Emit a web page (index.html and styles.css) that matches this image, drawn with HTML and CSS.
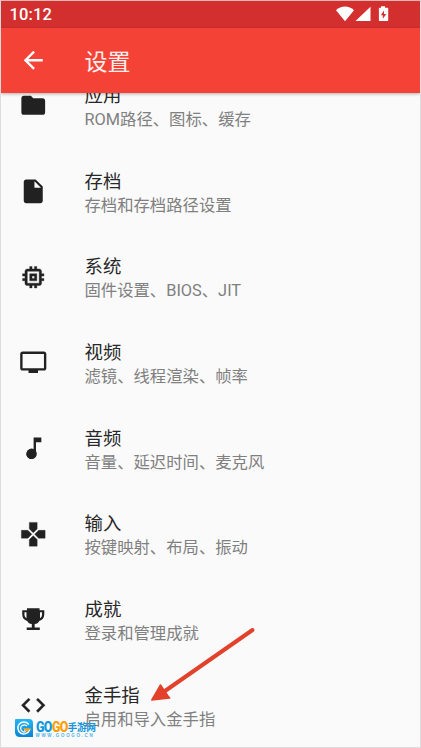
FILE: index.html
```
<!DOCTYPE html>
<html lang="zh-CN">
<head>
<meta charset="utf-8">
<title>设置</title>
<link rel="stylesheet" href="styles.css">
</head>
<body>
<div class="screen">
  <header class="status">
    <span class="clock">10:12</span>
    <svg class="status-icons" width="54" height="18" viewBox="0 0 54 18">
      <path d="M0 4.2C5-.7 13-.7 18 4.2L9 15.2Z"/>
      <path d="M34.5 .8V15H19.5Z"/>
      <path fill-rule="evenodd" d="M45 .2h4v1.5h2.3q.9 0 .9.9v11.6q0 .9-.9.9h-7.5q-.9 0-.9-.9V2.6q0-.9.9-.9H45ZM48 4.5l-3.2 4.7h2v3.6l3.5-4.8H48Z"/>
    </svg>
  </header>
  <div class="toolbar">
    <svg class="back" viewBox="0 0 24 24"><path d="M20 11H7.83l5.59-5.59L12 4l-8 8 8 8 1.41-1.41L7.83 13H20z"/></svg>
    <h1>设置</h1>
  </div>
  <main>
    <ul class="list">
      <li><svg class="icon" viewBox="0 0 24 24"><path d="M10 4H4c-1.1 0-2 .9-2 2v12c0 1.1.9 2 2 2h16c1.1 0 2-.9 2-2V8c0-1.1-.9-2-2-2h-8z"/></svg><div><h2>应用</h2><p>ROM路径、图标、缓存</p></div></li>
      <li><svg class="icon" viewBox="0 0 24 24"><path d="M6 2c-1.1 0-2 .9-2 2v16c0 1.1.9 2 2 2h12c1.1 0 2-.9 2-2V8l-6-6zm7 7V3.5L18.5 9z"/></svg><div><h2>存档</h2><p>存档和存档路径设置</p></div></li>
      <li><svg class="icon" viewBox="0 0 24 24"><path class="solid" d="M15 9H9v6h6zm-2 4h-2v-2h2zm8-2V9h-2V7c0-1.100-.9-2-2-2h-2V3h-2v2h-2V3H9v2H7c-1.100 0-2 .9-2 2v2H3v2h2v2H3v2h2v2c0 1.100.9 2 2 2h2v2h2v-2h2v2h2v-2h2c1.100 0 2-.9 2-2v-2h2v-2h-2v-2h2zm-4 6H7V7h10z"/></svg><div><h2>系统</h2><p>固件设置、BIOS、JIT</p></div></li>
      <li><svg class="icon" viewBox="0 0 24 24"><path d="M21 3H3c-1.100 0-2 .9-2 2v12c0 1.100.9 2 2 2h5v2h8v-2h5c1.100 0 2-.9 2-2V5c0-1.100-.9-2-2-2zm0 14H3V5h18z"/></svg><div><h2>视频</h2><p>滤镜、线程渲染、帧率</p></div></li>
      <li><svg class="icon" viewBox="0 0 24 24"><path d="M12.300 3v10.550A4 4 0 1 0 14.300 17V7h4.500V3z"/><circle cx="10.600" cy="16.700" r="4.400"/></svg><div><h2>音频</h2><p>音量、延迟时间、麦克风</p></div></li>
      <li><svg class="icon" viewBox="0 0 24 24"><path class="solid" d="M15.300 7.500V2H8.700v5.500L12 10.800zM7.500 8.700H2v6.600h5.500l3.300-3.300zM8.700 16.500V22h6.600v-5.500L12 13.200zM16.500 8.700 13.200 12l3.300 3.300H22V8.700z"/></svg><div><h2>输入</h2><p>按键映射、布局、振动</p></div></li>
      <li><svg class="icon" viewBox="0 0 24 24"><path fill-rule="evenodd" d="M6.700 2.800h10.600v1.700H21.300v3.300c0 3-1.700 5-4.200 5.600-.9 1.500-2 2.400-3.900 2.700v2.900H17.500V21H6.500v-2h4.300v-2.900c-1.900-.3-3-1.200-3.900-2.700C4.400 12.800 2.700 10.800 2.700 7.800V4.500h4zM4.600 6.200v1.600c0 1.600.6 2.700 1.700 3.400V6.200zM17.700 6.200v5c1.100-.7 1.700-1.800 1.700-3.400V6.200z"/></svg><div><h2>成就</h2><p>登录和管理成就</p></div></li>
      <li><svg class="icon" viewBox="0 0 24 24"><path class="solid" d="M9.400 16.600 4.800 12l4.600-4.600L8 6l-6 6 6 6zm5.200 0 4.600-4.600-4.600-4.600L16 6l6 6-6 6z"/></svg><div><h2>金手指</h2><p>启用和导入金手指</p></div></li>
    </ul>
  </main>
  <svg class="arrow" width="106" height="76" viewBox="0 0 106 76"><path class="shaft" d="M101.500 4 14 65"/><path d="M.8 74 9.500 59 12.500 63.500 17 70 18.700 72Z"/></svg>
  <div class="watermark">
    <svg width="18" height="18" viewBox="0 0 18 18">
      <defs><linearGradient id="badge" x2="0" y2="1"><stop stop-color="#25b7f3"/><stop offset="1" stop-color="#0784d5"/></linearGradient></defs>
      <path fill="url(#badge)" d="M1 0h13q4 0 4 4v14H5q-5 0-5-5V1q0-1 1-1Z"/>
      <path class="ring" d="M13.800 5.500A6 6 0 1 0 14.500 11H9"/>
      <path class="inner" d="M12 7.200a3.500 3.500 0 1 0-1 5.300"/>
      <path class="gold" d="M8 9.200h8l-3 3.300h-2Z"/>
    </svg>
    <div class="brand">
      <div class="name"><span class="go">GO</span><span class="go gold-text">GO</span><span class="cn">手游网</span></div>
      <div class="site">WWW.GOOGO.CN</div>
    </div>
  </div>
</div>
</body>
</html>
```
FILE: styles.css
```
* { box-sizing: border-box; }
body { margin: 0; font-family: Roboto, "Noto Sans CJK SC", sans-serif; }
.screen {
  position: relative;
  display: flex;
  flex-direction: column;
  width: 421px;
  height: 748px;
  overflow: hidden;
  background: #fafafa;
  border: 1px solid #dedcdd;
  border-top-color: #e9b5b5;
}
.status {
  flex: none;
  display: flex;
  justify-content: space-between;
  height: 27px;
  padding: 5px 30px 0 8.500px;
  background: #d32f2f;
  color: #fff;
}
.clock { font-size: 16.500px; line-height: 18px; font-weight: 500; letter-spacing: .1px; }
.status-icons { fill: #fff; }
.toolbar {
  flex: none;
  display: flex;
  align-items: center;
  height: 65px;
  padding-left: 17.600px;
  background: #f44336;
  color: #fff;
  box-shadow: 0 1px 3px rgba(0, 0, 0, .3);
  z-index: 1;
}
.back { width: 28.500px; height: 28.500px; fill: #fff; }
h1 { margin: 4px 0 0 37.400px; font-size: 23px; line-height: 30px; font-weight: 400; color: #ffeeed; }
main { flex: 1; overflow: hidden; }
.list { margin: -30.300px 0 0; padding: 0; list-style: none; }
.list li { display: flex; align-items: center; height: 85.680px; padding-left: 17.600px; }
.icon { flex: none; width: 28.500px; height: 28.500px; margin-right: 37.400px; fill: #212121; }
.solid { stroke: #212121; stroke-width: .3; }
h2 { margin: 4px 0 0; font-size: 18.400px; line-height: 25px; font-weight: 400; color: #282828; }
p { margin: 0; font-size: 16.350px; line-height: 24px; font-weight: 400; color: #808080; }
.arrow { position: absolute; left: 150px; top: 625px; fill: #e2412b; }
.arrow path { stroke: #e2412b; stroke-width: 1.500; stroke-linejoin: round; }
.arrow .shaft { stroke-width: 4; stroke-linecap: round; }
.watermark { position: absolute; left: 14px; top: 718px; display: flex; gap: 2.500px; }
.ring, .inner { fill: none; stroke: #fff; stroke-width: 1.500; }
.inner { stroke-width: 1.200; }
.gold { fill: #f6a51b; }
.name { display: flex; height: 14px; line-height: 14px; white-space: nowrap; }
.go { width: 16px; font: 900 15.500px/17px Roboto, sans-serif; letter-spacing: -1px; color: #1199df; transform: scaleX(.8); transform-origin: left; }
.gold-text { color: #ff9f0a; }
.cn { font-size: 9.700px; line-height: 17px; font-weight: 700; letter-spacing: -.3px; color: #1595dc; }
.site { font: 700 4.500px/5px "Liberation Sans", sans-serif; letter-spacing: 1.650px; color: #4fb4e9; white-space: nowrap; }
```
